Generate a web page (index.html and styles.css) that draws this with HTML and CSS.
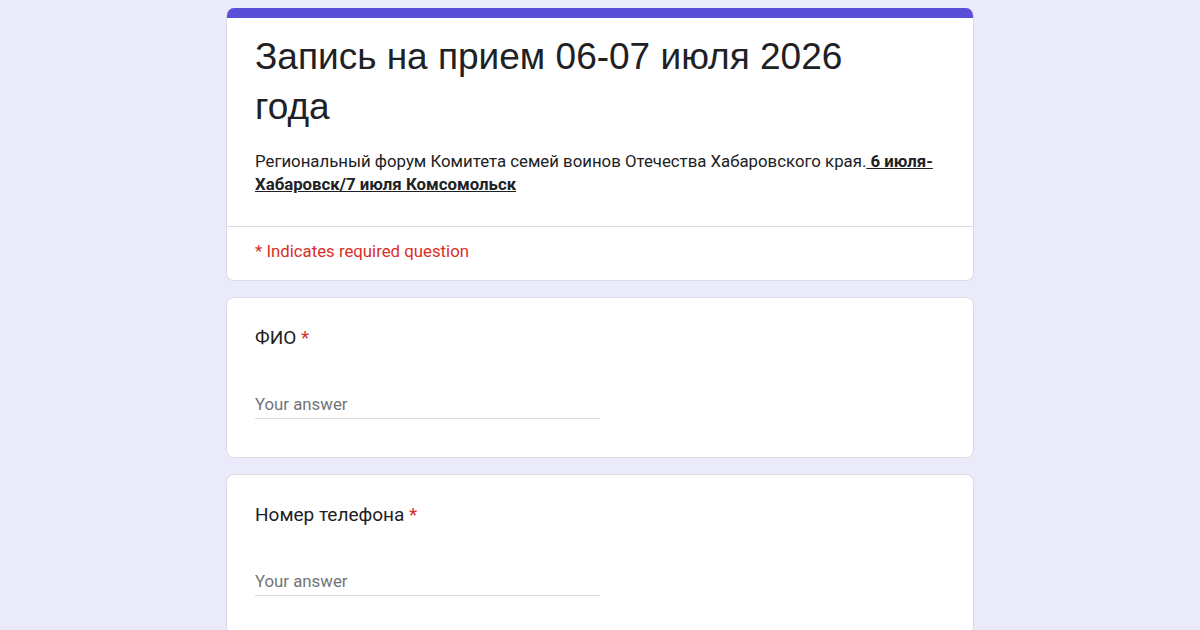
FILE: index.html
```html
<!DOCTYPE html>
<html lang="ru">
<head>
<meta charset="utf-8">
<link rel="stylesheet" href="styles.css">
</head>
<body>
<main class="form">
  <section class="card header-card">
    <div class="accent"></div>
    <div class="header-body">
      <h1 class="title">Запись на прием 06-07 июля 2026 года</h1>
      <p class="desc">Региональный форум Комитета семей воинов Отечества Хабаровского края.<b class="link"> 6 июля-Хабаровск/7 июля Комсомольск</b></p>
    </div>
    <div class="required-note">* Indicates required question</div>
  </section>
  <section class="card question">
    <div class="q-label">ФИО <span class="star">*</span></div>
    <div class="answer">Your answer</div>
  </section>
  <section class="card question">
    <div class="q-label">Номер телефона <span class="star">*</span></div>
    <div class="answer">Your answer</div>
  </section>
</main>
</body>
</html>
```

FILE: styles.css
```css
html, body {
  margin: 0;
  padding: 0;
  background: #ebeafb;
  font-family: Roboto, "Liberation Sans", Arial, sans-serif;
  color: #202124;
}
.form {
  width: 748px;
  margin: 0 auto;
  padding-top: 8px;
  display: flex;
  flex-direction: column;
  gap: 16px;
}
.card {
  background: #fff;
  border: 1px solid #dadce0;
  border-radius: 8px;
  overflow: hidden;
}
.header-card {
  border-top: none;
}
.accent {
  height: 10px;
  background: #5a4ed8;
  margin: 0 -1px;
}
.header-body {
  padding: 14px 28px 30px;
  border-bottom: 1px solid #dadce0;
}
.title {
  margin: 0;
  max-width: 640px;
  font-family: "Liberation Sans", Arial, sans-serif;
  font-size: 37px;
  font-weight: 400;
  line-height: 50px;
  color: #202124;
}
.desc {
  margin: 18px 0 0;
  font-size: 16.8px;
  line-height: 23px;
}
.link {
  font-weight: 700;
  text-decoration: underline;
}
.required-note {
  padding: 13px 28px 18px;
  color: #d93025;
  font-size: 16.8px;
  line-height: 22px;
}
.question {
  padding: 28px 28px 38px;
}
.q-label {
  font-size: 19px;
  line-height: 24px;
}
.star {
  color: #d93025;
}
.answer {
  margin-top: 43px;
  width: 345px;
  font-size: 16.8px;
  line-height: 22px;
  color: #70757a;
  border-bottom: 1px solid #dadce0;
  padding-bottom: 3px;
}
```
